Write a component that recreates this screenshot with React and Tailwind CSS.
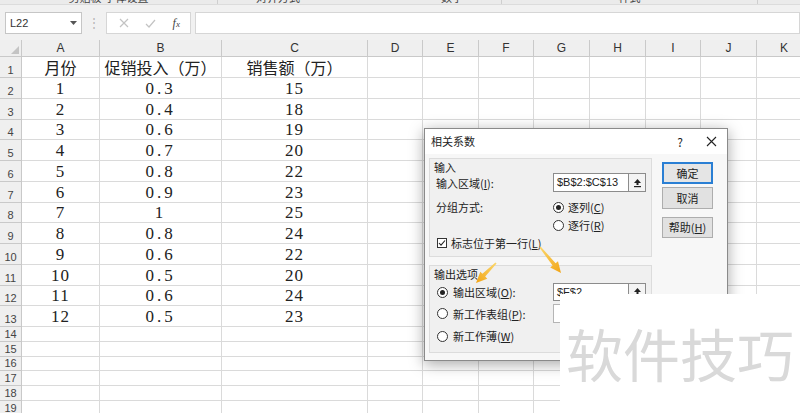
const cols = [
  { k: "A", w: "w-[78px]" },
  { k: "B", w: "w-[122px]" },
  { k: "C", w: "w-[146px]" },
  { k: "D", w: "w-[55px]" },
  { k: "E", w: "w-[56px]" },
  { k: "F", w: "w-[55px]" },
  { k: "G", w: "w-[56px]" },
  { k: "H", w: "w-[56px]" },
  { k: "I", w: "w-[55px]" },
  { k: "J", w: "w-[56px]" },
  { k: "K", w: "w-[55px]" },
];

const data = [
  ["1", "0.3", "15"],
  ["2", "0.4", "18"],
  ["3", "0.6", "19"],
  ["4", "0.7", "20"],
  ["5", "0.8", "22"],
  ["6", "0.9", "23"],
  ["7", "1", "25"],
  ["8", "0.8", "24"],
  ["9", "0.6", "22"],
  ["10", "0.5", "20"],
  ["11", "0.6", "24"],
  ["12", "0.5", "23"],
];

const sans = "font-['Liberation_Sans','Noto_Sans_CJK_SC',sans-serif]";
const cjk = "font-['Noto_Sans_CJK_SC',sans-serif]";
const serif = "font-['Liberation_Serif','Noto_Sans_CJK_SC',serif]";

function RowHeader({ n, h }) {
  return (
    <div className={`w-[22px] ${h} shrink-0 bg-[#efefef] border-r border-b border-[#c9c9c9] flex items-end justify-center text-[11px] leading-[13px] text-[#444] ${sans}`}>
      {n}
    </div>
  );
}

function Cell({ w, h, children, kind }) {
  const font =
    kind === "cjk"
      ? `${cjk} text-[16px] leading-[19px] text-[#222]`
      : `${serif} text-[17px] leading-[18px] text-[#222] tracking-[1px]`;
  return (
    <div className={`${w} ${h} shrink-0 border-r border-b border-[#dadada] flex items-end justify-center ${font}`}>
      {children}
    </div>
  );
}

function UpButton() {
  return (
    <div className="w-[17px] h-full border-l border-[#8c8c8c] bg-[#f4f4f4] flex items-center justify-center">
      <svg width="9" height="10" viewBox="0 0 9 10">
        <path d="M4.5 1 L8 5 H1 Z" fill="#222" />
        <rect x="3.5" y="5" width="2" height="2" fill="#222" />
        <rect x="1" y="8" width="7" height="1.2" fill="#222" />
      </svg>
    </div>
  );
}

function Radio({ on }) {
  return (
    <div className="w-[11px] h-[11px] rounded-full border border-[#333] bg-white flex items-center justify-center shrink-0">
      {on && <div className="w-[5px] h-[5px] rounded-full bg-[#222]" />}
    </div>
  );
}

function Spreadsheet() {
  return (
    <div className="flex flex-col">
      <div className="flex">
        <div className="w-[22px] h-[17px] shrink-0 bg-[#efefef] border-r border-b border-[#c9c9c9] flex items-end justify-end p-[2px]">
          <svg width="8" height="8" viewBox="0 0 8 8">
            <path d="M8 0 V8 H0 Z" fill="#c4c4c4" />
          </svg>
        </div>
        {cols.map((c) => (
          <div key={c.k} className={`${c.w} h-[17px] shrink-0 bg-[#efefef] border-r border-b border-[#c9c9c9] flex items-end justify-center text-[12px] leading-[15px] text-[#333] ${sans}`}>
            {c.k}
          </div>
        ))}
      </div>
      <div className="flex">
        <RowHeader n="1" h="h-[21px]" />
        <Cell w={cols[0].w} h="h-[21px]" kind="cjk">月份</Cell>
        <Cell w={cols[1].w} h="h-[21px]" kind="cjk">促销投入（万）</Cell>
        <Cell w={cols[2].w} h="h-[21px]" kind="cjk">销售额（万）</Cell>
        {cols.slice(3).map((c) => (
          <Cell key={c.k} w={c.w} h="h-[21px]" />
        ))}
      </div>
      {data.map((r, i) => (
        <div key={i} className="flex">
          <RowHeader n={i + 2} h="h-[20.75px]" />
          <Cell w={cols[0].w} h="h-[20.75px]">{r[0]}</Cell>
          <Cell w={cols[1].w} h="h-[20.75px]">
            <span className="tracking-[3px]">{r[1]}</span>
          </Cell>
          <Cell w={cols[2].w} h="h-[20.75px]">{r[2]}</Cell>
          {cols.slice(3).map((c) => (
            <Cell key={c.k} w={c.w} h="h-[20.75px]" />
          ))}
        </div>
      ))}
      {[14, 15, 16, 17, 18, 19].map((n) => (
        <div key={n} className="flex">
          <RowHeader n={n} h="h-[14.8px]" />
          {cols.map((c) => (
            <Cell key={c.k} w={c.w} h="h-[14.8px]" />
          ))}
        </div>
      ))}
    </div>
  );
}

function Dialog() {
  return (
    <div className={`absolute left-[424px] top-[128px] w-[304px] h-[233px] border border-[#8a8a8a] bg-[#f7f7f7] shadow-[0_3px_14px_rgba(0,0,0,0.35)] ${cjk} text-[11px] text-[#222]`}>
      <div className="h-[25px] bg-white flex items-center pl-[6px]">
        <span className="flex-1">相关系数</span>
        <span className="w-[20px] text-center text-[12px]">?</span>
        <svg className="ml-[16px] mr-[10px]" width="11" height="11" viewBox="0 0 11 11">
          <path d="M1 1 L10 10 M10 1 L1 10" stroke="#222" strokeWidth="1.1" />
        </svg>
      </div>
      <div className="flex">
        <div className="ml-[4px] w-[223px] flex flex-col">
          <div className="mt-[4px] h-[99px] border border-[#dcdcdc] bg-[#f0f0f0] flex flex-col">
            <div className="h-[14px] pt-[2px] leading-[12px] pl-[4px]">输入</div>
            <div className="h-[19px] flex items-center">
              <span className="pl-[6px] w-[123px] leading-[14px]">
                输入区域(<span className="underline">I</span>):
              </span>
              <div className="w-[93px] h-[19px] border border-[#8c8c8c] bg-white flex">
                <span className={`flex-1 pl-[3px] leading-[17px] ${sans}`}>$B$2:$C$13</span>
                <UpButton />
              </div>
            </div>
            <div className="mt-[6px] h-[18px] flex items-center">
              <span className="pl-[6px] w-[123px]">分组方式:</span>
              <Radio on />
              <span className="ml-[4px]">
                逐列(<span className="underline">C</span>)
              </span>
            </div>
            <div className="h-[18px] flex items-center pl-[123px]">
              <Radio />
              <span className="ml-[4px]">
                逐行(<span className="underline">R</span>)
              </span>
            </div>
            <div className="h-[18px] flex items-center pl-[7px]">
              <div className="w-[10px] h-[10px] border border-[#333] bg-white flex items-center justify-center">
                <svg width="8" height="8" viewBox="0 0 8 8">
                  <path d="M1 4 L3 6.2 L7 1.5" stroke="#222" strokeWidth="1.1" fill="none" />
                </svg>
              </div>
              <span className="ml-[4px]">
                标志位于第一行(<span className="underline">L</span>)
              </span>
            </div>
          </div>
          <div className="mt-[8px] h-[88px] border border-[#dcdcdc] bg-[#f0f0f0] flex flex-col">
            <div className="h-[14px] pt-[2px] leading-[12px] pl-[4px]">输出选项</div>
            <div className="mt-[3px] h-[18px] flex items-center">
              <div className="pl-[7px] w-[123px] flex items-center">
                <Radio on />
                <span className="ml-[5px] leading-[14px]">
                  输出区域(<span className="underline">O</span>):
                </span>
              </div>
              <div className="w-[93px] h-[18px] border border-[#8c8c8c] bg-white flex">
                <span className={`flex-1 pl-[3px] leading-[16px] ${sans}`}>$F$2</span>
                <UpButton />
              </div>
            </div>
            <div className="mt-[3px] h-[19px] flex items-center">
              <div className="pl-[7px] w-[123px] flex items-center">
                <Radio />
                <span className="ml-[5px] leading-[14px]">
                  新工作表组(<span className="underline">P</span>):
                </span>
              </div>
              <div className="w-[93px] h-[19px] border border-[#b5b5b5] bg-white" />
            </div>
            <div className="mt-[4px] h-[18px] flex items-center pl-[7px]">
              <Radio />
              <span className="ml-[5px]">
                新工作薄(<span className="underline">W</span>)
              </span>
            </div>
          </div>
        </div>
        <div className="ml-[10px] w-[51px] flex flex-col">
          <div className="mt-[8px] h-[22px] border-2 border-[#2a7fd4] bg-[#e5e5e5] flex items-center justify-center">确定</div>
          <div className="mt-[3px] h-[22px] border border-[#adadad] bg-[#e1e1e1] flex items-center justify-center">取消</div>
          <div className="mt-[8px] h-[21px] border border-[#adadad] bg-[#e1e1e1] flex items-center justify-center">
            帮助(<span className="underline">H</span>)
          </div>
        </div>
      </div>
    </div>
  );
}

function Arrows() {
  return (
    <svg className="absolute left-0 top-0 pointer-events-none" width="800" height="413">
      <defs>
        <linearGradient id="ga" x1="540" y1="247" x2="561" y2="273" gradientUnits="userSpaceOnUse">
          <stop offset="0" stopColor="#fbd66a" />
          <stop offset="1" stopColor="#f2a516" />
        </linearGradient>
        <linearGradient id="gb" x1="496" y1="263" x2="476" y2="283" gradientUnits="userSpaceOnUse">
          <stop offset="0" stopColor="#fbd66a" />
          <stop offset="1" stopColor="#f2a516" />
        </linearGradient>
      </defs>
      <polygon
        points="539.4,247.5 552.6,265.6 550.2,267.5 561,273 558,261.3 555.6,263.2 540.6,246.5"
        fill="url(#ga)"
      />
      <polygon
        points="495.4,262.4 482.4,273.8 480.3,271.7 476,283 487.3,278.7 485.2,276.6 496.6,263.6"
        fill="url(#gb)"
      />
    </svg>
  );
}

export default function App() {
  return (
    <div className={`relative w-[800px] h-[413px] overflow-hidden bg-white ${sans}`}>
      <div className="h-[40px] bg-[#f1f1f1] flex flex-col">
        <div className="h-[5px] overflow-hidden bg-[#ebebeb] border-b border-[#dcdcdc] flex text-[11px] leading-[11px] text-[#444]">
          <div className="w-[218px] border-r border-[#cfcfcf] flex justify-center">
            <span className="-mt-[7px]">剪贴板 字体设置</span>
          </div>
          <div className="w-[284px] border-r border-[#cfcfcf] flex justify-between px-[38px]">
            <span className="-mt-[7px]">对齐方式</span>
            <span className="-mt-[7px]">数字</span>
          </div>
          <div className="w-[256px] border-r border-[#cfcfcf] flex justify-center">
            <span className="-mt-[7px]">样式</span>
          </div>
          <div className="flex-1" />
        </div>
        <div className="mt-[7px] h-[22px] flex items-stretch">
          <div className="ml-[5px] w-[77px] bg-white border border-[#c6c6c6] flex items-center pl-[4px] pr-[4px] text-[11px] text-[#333]">
            <span className="flex-1">L22</span>
            <svg width="7" height="4" viewBox="0 0 7 4">
              <path d="M0 0 H7 L3.5 4 Z" fill="#555" />
            </svg>
          </div>
          <div className="w-[24px] flex items-center justify-center text-[#b5b5b5] text-[12px]">⋮</div>
          <div className="w-[85px] bg-white border border-[#d6d6d6] flex items-center justify-around pl-[4px] pr-[2px]">
            <svg width="10" height="10" viewBox="0 0 10 10">
              <path d="M1 1 L9 9 M9 1 L1 9" stroke="#c3c3c3" strokeWidth="1.2" />
            </svg>
            <svg width="11" height="9" viewBox="0 0 11 9">
              <path d="M1 5 L4 8 L10 1" stroke="#c3c3c3" strokeWidth="1.2" fill="none" />
            </svg>
            <span className="font-['Liberation_Serif',serif] italic text-[12px] text-[#444]">
              f<span className="text-[9px]">x</span>
            </span>
          </div>
          <div className="ml-[4px] flex-1 bg-white border border-[#d6d6d6]" />
        </div>
      </div>
      <Spreadsheet />
      <Dialog />
      <Arrows />
      <div className="absolute left-[560px] top-[294px] w-[240px] h-[119px] bg-white pt-[30px] pl-[6px]">
        <div className={`${cjk} text-[57px] leading-none text-[#d9d9d9] whitespace-nowrap`}>软件技巧</div>
      </div>
    </div>
  );
}
